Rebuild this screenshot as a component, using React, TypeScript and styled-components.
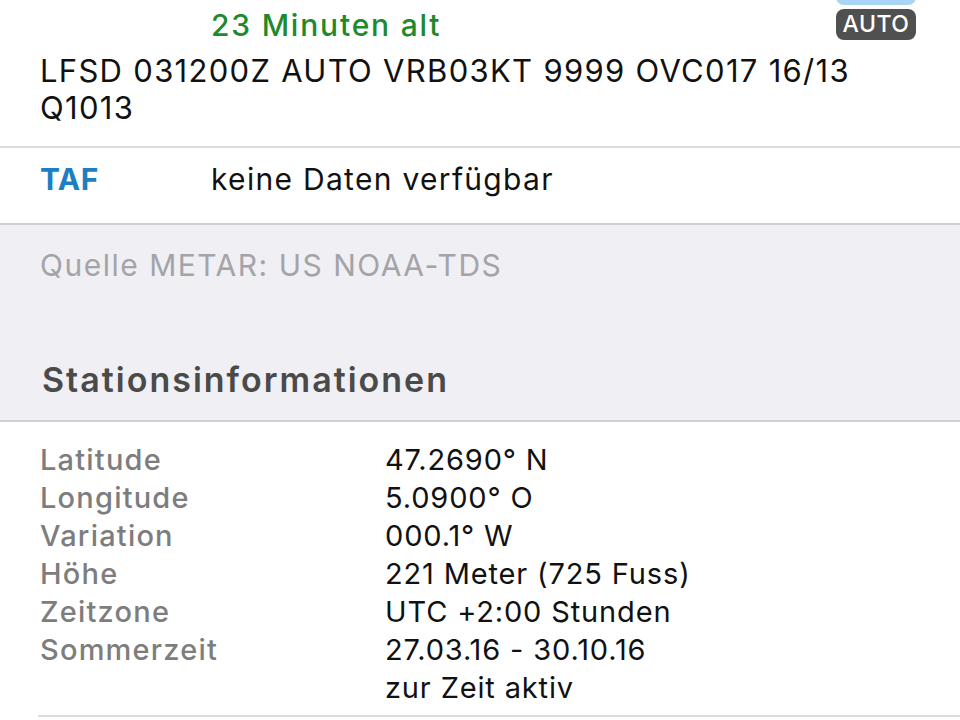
import React from "react";
import styled, { createGlobalStyle } from "styled-components";

const GlobalStyle = createGlobalStyle`
  body {
    margin: 0;
    background: #ffffff;
    font-family: Inter, "Liberation Sans", sans-serif;
    color: #111111;
    overflow: hidden;
  }
`;

const Page = styled.div`
  width: 960px;
  height: 720px;
  overflow: hidden;
  background: #ffffff;
`;

const MetarCell = styled.div`
  padding: 0 0 20px 40px;
  border-bottom: 2px solid #dcdcdc;
`;

const TopRow = styled.div`
  display: flex;
  align-items: flex-start;
  height: 52px;
`;

const Age = styled.div`
  margin-left: 171px;
  margin-top: 7px;
  color: #1f8a2c;
  font-size: 30px;
  font-weight: 500;
  letter-spacing: 1.8px;
  line-height: 36px;
  flex: 1;
`;

const Badges = styled.div`
  display: flex;
  flex-direction: column;
  align-items: flex-end;
  gap: 4px;
  margin-right: 44px;
  margin-top: -26px;
`;

const Badge = styled.div<{ $tone: "blue" | "dark" }>`
  width: 80px;
  height: 31px;
  border-radius: 8px;
  background: ${(p) => (p.$tone === "blue" ? "#a8d5f3" : "#505050")};
  color: #ffffff;
  font-size: 23px;
  font-weight: 500;
  letter-spacing: 0.5px;
  line-height: 31px;
  text-align: center;
`;

const MetarText = styled.div`
  font-size: 31px;
  letter-spacing: 1.3px;
  line-height: 37px;
  padding-right: 60px;
`;

const TafRow = styled.div`
  display: grid;
  grid-template-columns: 171px 1fr;
  padding: 12px 0 25px 40px;
  font-size: 30px;
  letter-spacing: 1.3px;
  line-height: 38px;
  border-bottom: 2px solid #cfcfd4;
`;

const TafLabel = styled.div`
  color: #1c7fc3;
  font-weight: 700;
  letter-spacing: 0.5px;
`;

const GreySection = styled.div`
  background: #efeff4;
  padding: 21px 40px 0 40px;
  height: 174px;
  border-bottom: 2px solid #cfcfd4;
`;

const Source = styled.div`
  color: #a4a4a8;
  font-size: 30px;
  letter-spacing: 1.5px;
  line-height: 38px;
`;

const Heading = styled.div`
  margin-top: 76px;
  margin-left: 2px;
  color: #4a4a4a;
  font-size: 34px;
  font-weight: 600;
  letter-spacing: 2px;
  line-height: 40px;
`;

const InfoList = styled.div`
  margin-left: 38px;
  padding: 19px 0 8px 2px;
  border-bottom: 2px solid #dcdcdc;
`;

const InfoRow = styled.div`
  display: grid;
  grid-template-columns: 345px 1fr;
  font-size: 29px;
  line-height: 38px;
`;

const InfoLabel = styled.div`
  color: #7d7d7d;
  font-weight: 500;
  letter-spacing: 1.2px;
`;

const InfoValue = styled.div`
  color: #111111;
  letter-spacing: 0.85px;
`;

const info: [string, string[]][] = [
  ["Latitude", ["47.2690° N"]],
  ["Longitude", ["5.0900° O"]],
  ["Variation", ["000.1° W"]],
  ["Höhe", ["221 Meter (725 Fuss)"]],
  ["Zeitzone", ["UTC +2:00 Stunden"]],
  ["Sommerzeit", ["27.03.16 - 30.10.16", "zur Zeit aktiv"]],
];

const App = () => {
  return (
    <Page>
      <GlobalStyle />
      <MetarCell>
        <TopRow>
          <Age>23 Minuten alt</Age>
          <Badges>
            <Badge $tone="blue" />
            <Badge $tone="dark">AUTO</Badge>
          </Badges>
        </TopRow>
        <MetarText>
          LFSD 031200Z AUTO VRB03KT 9999 OVC017 16/13
          <br />
          Q1013
        </MetarText>
      </MetarCell>
      <TafRow>
        <TafLabel>TAF</TafLabel>
        <div>keine Daten verfügbar</div>
      </TafRow>
      <GreySection>
        <Source>Quelle METAR: US NOAA-TDS</Source>
        <Heading>Stationsinformationen</Heading>
      </GreySection>
      <InfoList>
        {info.map(([label, values]) => (
          <InfoRow key={label}>
            <InfoLabel>{label}</InfoLabel>
            <InfoValue>
              {values.map((v) => (
                <div key={v}>{v}</div>
              ))}
            </InfoValue>
          </InfoRow>
        ))}
      </InfoList>
    </Page>
  );
};

export default App;
